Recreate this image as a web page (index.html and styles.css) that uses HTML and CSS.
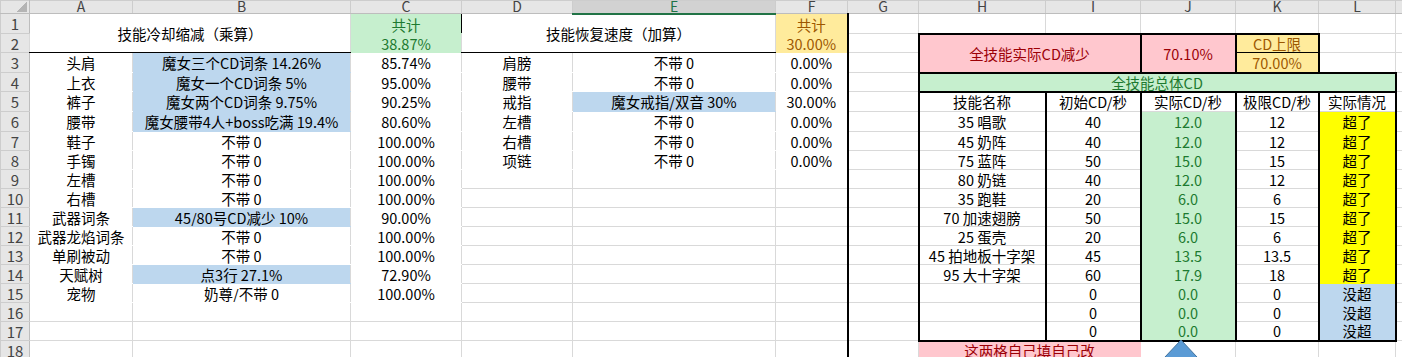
FILE: index.html
```html
<!DOCTYPE html>
<html>
  <head>
    <meta charset="utf-8" />
    <title>技能CD计算</title>
    <link rel="stylesheet" href="styles.css">
  </head>
  <body>
    <div class="sheet">
      <table class="grid">
        <colgroup>
          <col class="w-hdr" />
          <col class="w-a" />
          <col class="w-b" />
          <col class="w-c" />
          <col class="w-d" />
          <col class="w-e" />
          <col class="w-f" />
          <col class="w-g" />
          <col class="w-h" />
          <col class="w-i" />
          <col class="w-j" />
          <col class="w-k" />
          <col class="w-l" />
          <col class="w-m" />
        </colgroup>

        <tr class="r-head">
          <th class="corner"><span class="corner-mark"></span></th>
          <th class="col">A</th>
          <th class="col">B</th>
          <th class="col">C</th>
          <th class="col">D</th>
          <th class="col sel">E</th>
          <th class="col">F</th>
          <th class="col">G</th>
          <th class="col">H</th>
          <th class="col">I</th>
          <th class="col">J</th>
          <th class="col">K</th>
          <th class="col">L</th>
          <th class="col"></th>
        </tr>

        <tr class="r-tall">
          <th class="row">1</th>
          <td colspan="2" rowspan="2" class="title">技能冷却缩减（乘算）</td>
          <td class="good total total-top">共计</td>
          <td colspan="2" rowspan="2" class="title">技能恢复速度（加算）</td>
          <td class="neutral total-top edge-r">共计</td>
          <td></td>
          <td></td>
          <td></td>
          <td></td>
          <td class="k-mark"></td>
          <td></td>
          <td></td>
        </tr>

        <tr>
          <th class="row">2</th>
          <td class="good total total-bot">38.87%</td>
          <td class="neutral total-bot edge-r">30.00%</td>
          <td></td>
          <td colspan="2" rowspan="2" class="bad box">全技能实际CD减少</td>
          <td rowspan="2" class="bad box">70.10%</td>
          <td class="neutral box cap-top">CD上限</td>
          <td></td>
          <td></td>
        </tr>

        <tr class="r-tall">
          <th class="row">3</th>
          <td class="flat">头肩</td>
          <td class="blue">魔女三个CD词条 14.26%</td>
          <td class="flat">85.74%</td>
          <td class="flat">肩膀</td>
          <td class="flat">不带 0</td>
          <td class="flat edge-r">0.00%</td>
          <td></td>
          <td class="neutral box cap-bot">70.00%</td>
          <td></td>
          <td></td>
        </tr>

        <tr>
          <th class="row">4</th>
          <td class="flat">上衣</td>
          <td class="blue">魔女一个CD词条 5%</td>
          <td class="flat">95.00%</td>
          <td class="flat">腰带</td>
          <td class="flat">不带 0</td>
          <td class="flat edge-r">0.00%</td>
          <td></td>
          <td colspan="5" class="good box">全技能总体CD</td>
          <td></td>
        </tr>

        <tr class="r-tall">
          <th class="row">5</th>
          <td class="flat">裤子</td>
          <td class="blue">魔女两个CD词条 9.75%</td>
          <td class="flat">90.25%</td>
          <td class="flat">戒指</td>
          <td class="blue">魔女戒指/双音 30%</td>
          <td class="flat edge-r">30.00%</td>
          <td></td>
          <td class="tb">技能名称</td>
          <td class="tb">初始CD/秒</td>
          <td class="tb">实际CD/秒</td>
          <td class="tb">极限CD/秒</td>
          <td class="tb">实际情况</td>
          <td></td>
        </tr>

        <tr class="r-tall">
          <th class="row">6</th>
          <td class="flat">腰带</td>
          <td class="blue">魔女腰带4人+boss吃满 19.4%</td>
          <td class="flat">80.60%</td>
          <td class="flat">左槽</td>
          <td class="flat">不带 0</td>
          <td class="flat edge-r">0.00%</td>
          <td></td>
          <td class="tb">35 唱歌</td>
          <td class="tb">40</td>
          <td class="tb good">12.0</td>
          <td class="tb">12</td>
          <td class="tb over">超了</td>
          <td></td>
        </tr>

        <tr>
          <th class="row">7</th>
          <td class="flat">鞋子</td>
          <td class="flat">不带 0</td>
          <td class="flat">100.00%</td>
          <td class="flat">右槽</td>
          <td class="flat">不带 0</td>
          <td class="flat edge-r">0.00%</td>
          <td></td>
          <td class="tb">45 奶阵</td>
          <td class="tb">40</td>
          <td class="tb good">12.0</td>
          <td class="tb">12</td>
          <td class="tb over">超了</td>
          <td></td>
        </tr>

        <tr>
          <th class="row">8</th>
          <td class="flat">手镯</td>
          <td class="flat">不带 0</td>
          <td class="flat">100.00%</td>
          <td class="flat">项链</td>
          <td class="flat">不带 0</td>
          <td class="flat edge-r">0.00%</td>
          <td></td>
          <td class="tb">75 蓝阵</td>
          <td class="tb">50</td>
          <td class="tb good">15.0</td>
          <td class="tb">15</td>
          <td class="tb over">超了</td>
          <td></td>
        </tr>

        <tr>
          <th class="row">9</th>
          <td class="flat">左槽</td>
          <td class="flat">不带 0</td>
          <td class="flat">100.00%</td>
          <td></td>
          <td></td>
          <td class="edge-r"></td>
          <td></td>
          <td class="tb">80 奶链</td>
          <td class="tb">40</td>
          <td class="tb good">12.0</td>
          <td class="tb">12</td>
          <td class="tb over">超了</td>
          <td></td>
        </tr>

        <tr>
          <th class="row">10</th>
          <td class="flat">右槽</td>
          <td class="flat">不带 0</td>
          <td class="flat">100.00%</td>
          <td></td>
          <td></td>
          <td class="edge-r"></td>
          <td></td>
          <td class="tb">35 跑鞋</td>
          <td class="tb">20</td>
          <td class="tb good">6.0</td>
          <td class="tb">6</td>
          <td class="tb over">超了</td>
          <td></td>
        </tr>

        <tr>
          <th class="row">11</th>
          <td class="flat">武器词条</td>
          <td class="blue">45/80号CD减少 10%</td>
          <td class="flat">90.00%</td>
          <td></td>
          <td></td>
          <td class="edge-r"></td>
          <td></td>
          <td class="tb">70 加速翅膀</td>
          <td class="tb">50</td>
          <td class="tb good">15.0</td>
          <td class="tb">15</td>
          <td class="tb over">超了</td>
          <td></td>
        </tr>

        <tr>
          <th class="row">12</th>
          <td class="flat">武器龙焰词条</td>
          <td class="flat">不带 0</td>
          <td class="flat">100.00%</td>
          <td></td>
          <td></td>
          <td class="edge-r"></td>
          <td></td>
          <td class="tb">25 蛋壳</td>
          <td class="tb">20</td>
          <td class="tb good">6.0</td>
          <td class="tb">6</td>
          <td class="tb over">超了</td>
          <td></td>
        </tr>

        <tr>
          <th class="row">13</th>
          <td class="flat">单刷被动</td>
          <td class="flat">不带 0</td>
          <td class="flat">100.00%</td>
          <td></td>
          <td></td>
          <td class="edge-r"></td>
          <td></td>
          <td class="tb">45 拍地板十字架</td>
          <td class="tb">45</td>
          <td class="tb good">13.5</td>
          <td class="tb">13.5</td>
          <td class="tb over">超了</td>
          <td></td>
        </tr>

        <tr>
          <th class="row">14</th>
          <td class="flat">天赋树</td>
          <td class="blue">点3行 27.1%</td>
          <td class="flat">72.90%</td>
          <td></td>
          <td></td>
          <td class="edge-r"></td>
          <td></td>
          <td class="tb">95 大十字架</td>
          <td class="tb">60</td>
          <td class="tb good">17.9</td>
          <td class="tb">18</td>
          <td class="tb over">超了</td>
          <td></td>
        </tr>

        <tr>
          <th class="row">15</th>
          <td class="flat">宠物</td>
          <td class="flat">奶尊/不带 0</td>
          <td class="flat">100.00%</td>
          <td></td>
          <td></td>
          <td class="edge-r"></td>
          <td></td>
          <td class="tb"></td>
          <td class="tb">0</td>
          <td class="tb good">0.0</td>
          <td class="tb">0</td>
          <td class="tb under">没超</td>
          <td></td>
        </tr>

        <tr>
          <th class="row">16</th>
          <td></td>
          <td></td>
          <td></td>
          <td></td>
          <td></td>
          <td class="edge-r"></td>
          <td></td>
          <td class="tb"></td>
          <td class="tb">0</td>
          <td class="tb good">0.0</td>
          <td class="tb">0</td>
          <td class="tb under">没超</td>
          <td></td>
        </tr>

        <tr>
          <th class="row">17</th>
          <td></td>
          <td></td>
          <td></td>
          <td></td>
          <td></td>
          <td class="edge-r"></td>
          <td></td>
          <td class="tb tb-end"></td>
          <td class="tb tb-end">0</td>
          <td class="tb tb-end good">0.0</td>
          <td class="tb tb-end">0</td>
          <td class="tb tb-end under">没超</td>
          <td></td>
        </tr>

        <tr>
          <th class="row">18</th>
          <td></td>
          <td></td>
          <td></td>
          <td></td>
          <td></td>
          <td class="edge-r"></td>
          <td></td>
          <td colspan="2" class="bad">这两格自己填自己改</td>
          <td></td>
          <td></td>
          <td></td>
          <td></td>
        </tr>
      </table>

      <!-- block arrow pointing up at the J column -->
      <svg class="arrow" width="60" height="24" viewBox="0 0 60 24">
        <polygon points="30,1 62,35 -2,35" fill="#5b9bd5" stroke="#41719c" stroke-width="1" />
      </svg>
    </div>
  </body>
</html>
```

FILE: styles.css
```css
html,
body {
  margin: 0;
  padding: 0;
  overflow: hidden;
  background: #fff;
}
body {
  font-family: "Noto Sans CJK SC", "Noto Sans", sans-serif;
  font-size: 14.5px;
  color: #000;
}
.sheet {
  position: relative;
  width: 1402px;
  height: 357px;
  overflow: hidden;
}
.grid {
  border-collapse: collapse;
  table-layout: fixed;
  width: 1455px;
}

/* column widths */
.w-hdr { width: 29px; }
.w-a { width: 103px; }
.w-b { width: 218px; }
.w-c { width: 111px; }
.w-d { width: 111px; }
.w-e { width: 203px; }
.w-f { width: 72px; }
.w-g { width: 71px; }
.w-h { width: 127px; }
.w-i { width: 95px; }
.w-j { width: 95px; }
.w-k { width: 83px; }
.w-l { width: 77px; }
.w-m { width: 60px; }

tr { height: 19px; }
tr.r-tall { height: 20px; }
tr.r-head { height: 13px; }

td {
  border: 1px solid #d9d9d9;
  padding: 0;
  text-align: center;
  vertical-align: middle;
  white-space: nowrap;
  overflow: hidden;
  line-height: 17px;
}

/* headers */
th {
  padding: 0;
  font-weight: normal;
  background: #e6e6e6;
  color: #444;
  border: 1px solid #cdcdcd;
  overflow: hidden;
  white-space: nowrap;
}
th.col {
  font-size: 14px;
  line-height: 11px;
  vertical-align: top;
  border-bottom-color: #bdbdbd;
}
th.col.sel {
  background: #d2d2d2;
  color: #217346;
  border-bottom: 2px solid #217346;
}
th.row {
  font-size: 15px;
  line-height: 17px;
  text-align: center;
  border-right-color: #bdbdbd;
}
th.corner {
  position: relative;
  border-bottom-color: #bdbdbd;
  border-right-color: #bdbdbd;
}
.corner-mark {
  position: absolute;
  right: 2px;
  bottom: 1px;
  width: 11px;
  height: 11px;
  background: linear-gradient(to top left, #b4b4b4 50%, transparent 50%);
}

/* left block */
.title {
  border-bottom: 1px solid #000;
}
.flat {
  border-top-color: #fff;
  border-bottom-color: #fff;
}
.edge-r {
  border-right: 2px solid #000;
}
.total {
  border-left: 1px solid #000;
  border-right: 1px solid #000;
}
.total-top {
  line-height: 16px;
  padding-top: 3px;
}
.total-bot {
  border-bottom: 1px solid #000;
}

/* fills */
.blue {
  background: #bdd7ee;
  border-top-color: #bdd7ee;
  border-bottom-color: #bdd7ee;
}
.good {
  background: #c6efce;
  color: #1d7a30;
  border-top-color: #c6efce;
  border-bottom-color: #c6efce;
}
.neutral {
  background: #ffeb9c;
  color: #9c5700;
  border-top-color: #ffeb9c;
  border-bottom-color: #ffeb9c;
}
.bad {
  background: #ffc7ce;
  color: #9c0006;
  border-color: #ffc7ce;
}
.over {
  background: #ffff00;
  border-top-color: #ffff00;
  border-bottom-color: #ffff00;
}
.under {
  background: #bdd7ee;
  border-top-color: #bdd7ee;
  border-bottom-color: #bdd7ee;
}

/* right block */
.k-mark {
  border-left: 1px solid #000;
}
.box {
  border: 2px solid #000;
}
.cap-top {
  border-bottom: 1px solid #000;
}
.cap-bot {
  border-top: 1px solid #000;
}
.tb {
  border-left: 2px solid #000;
  border-right: 2px solid #000;
}
.tb-end {
  border-bottom: 2px solid #000;
}

.arrow {
  position: absolute;
  left: 1151px;
  top: 339px;
}
```
